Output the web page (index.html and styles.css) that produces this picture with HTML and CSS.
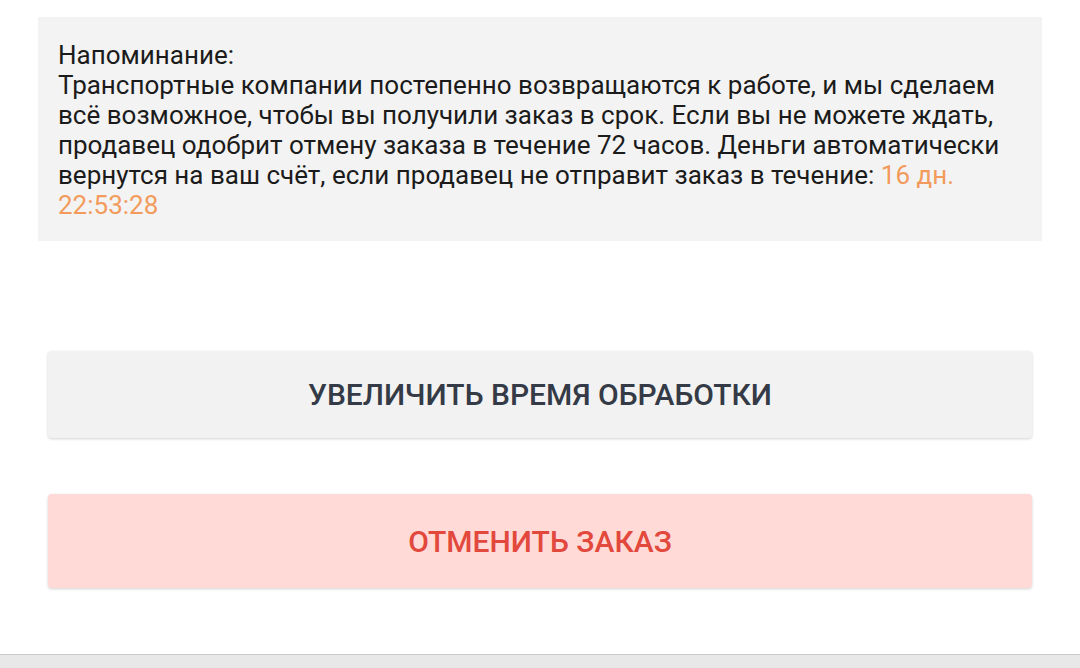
FILE: index.html
```html
<!DOCTYPE html>
<html lang="ru">
<head>
  <meta charset="UTF-8">
  <title>Заказ</title>
  <meta name="viewport" content="width=device-width, initial-scale=1.0">
  <link rel="stylesheet" href="styles.css">
</head>
<body>

  <div class="page">
    <div class="notice">
      Напоминание:<br>
      Транспортные компании постепенно возвращаются к работе, и мы сделаем всё возможное, чтобы вы получили заказ в срок. Если вы не можете ждать, продавец одобрит отмену заказа в течение 72 часов. Деньги автоматически вернутся на ваш счёт, если продавец не отправит заказ в течение: <span class="timer">16 дн. 22:53:28</span>
    </div>

    <div class="actions">
      <button class="btn btn-extend">УВЕЛИЧИТЬ ВРЕМЯ ОБРАБОТКИ</button>
      <button class="btn btn-cancel">ОТМЕНИТЬ ЗАКАЗ</button>
    </div>
  </div>

  <div class="bottom-bar"></div>

</body>
</html>
```

FILE: styles.css
```css
body {
  margin: 0;
  background: #fff;
  font-family: Roboto, "Noto Sans", sans-serif;
  height: 668px;
  overflow: hidden;
  display: flex;
  flex-direction: column;
}

.page {
  flex: 1;
  padding: 17px 38px 0 38px;
}

.notice {
  background: #f3f3f3;
  padding: 23px 20px 21px 20px;
  font-size: 26px;
  line-height: 30px;
  color: #1b1b1b;
}

.timer {
  color: #f29b5c;
}

.actions {
  display: flex;
  flex-direction: column;
  padding: 110px 10px 0 10px;
  gap: 56px;
}

.btn {
  border: none;
  border-radius: 4px;
  font-family: Roboto, "Noto Sans", sans-serif;
  font-size: 30px;
  font-weight: 500;
  cursor: pointer;
  box-shadow: 0 1px 3px rgba(0,0,0,0.18);
}

.btn-extend {
  height: 87px;
  background: #f2f2f2;
  color: #343a46;
}

.btn-cancel {
  height: 94px;
  background: #ffdad7;
  color: #e2483c;
}

.bottom-bar {
  height: 13px;
  background: #e8e8e8;
  border-top: 1px solid #c9c9c9;
}
```
